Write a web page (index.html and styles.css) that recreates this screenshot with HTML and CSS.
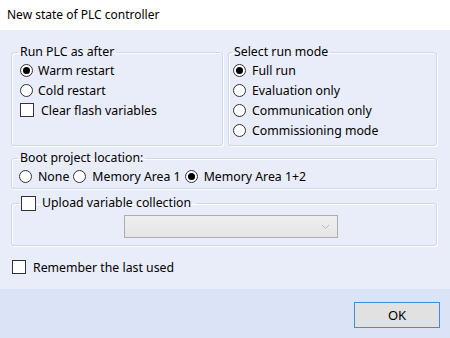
FILE: index.html
```html
<!DOCTYPE html>
<html lang="en">
<head>
    <meta charset="UTF-8">
    <title>New state of PLC controller</title>
    <link rel="stylesheet" href="styles.css">
</head>
<body>
    <div class="dialog">
        <div class="titlebar">New state of PLC controller</div>

        <div class="content">
            <div class="top-row">
                <fieldset class="group group-run">
                    <legend>Run PLC as after</legend>
                    <div class="group-body">
                        <label class="row"><input type="radio" name="restart" checked> Warm restart</label>
                        <label class="row"><input type="radio" name="restart"> Cold restart</label>
                        <label class="row"><input type="checkbox"> Clear flash variables</label>
                    </div>
                </fieldset>

                <fieldset class="group group-mode">
                    <legend>Select run mode</legend>
                    <div class="group-body">
                        <label class="row"><input type="radio" name="mode" checked> Full run</label>
                        <label class="row"><input type="radio" name="mode"> Evaluation only</label>
                        <label class="row"><input type="radio" name="mode"> Communication only</label>
                        <label class="row"><input type="radio" name="mode"> Commissioning mode</label>
                    </div>
                </fieldset>
            </div>

            <fieldset class="group group-boot">
                <legend>Boot project location:</legend>
                <div class="group-body inline-row">
                    <label class="row"><input type="radio" name="boot"> None</label>
                    <label class="row"><input type="radio" name="boot"> Memory Area 1</label>
                    <label class="row"><input type="radio" name="boot" checked> Memory Area 1+2</label>
                </div>
            </fieldset>

            <fieldset class="group group-upload">
                <legend><label class="row"><input type="checkbox"> Upload variable collection</label></legend>
                <div class="group-body">
                    <div class="combo">
                        <svg width="9" height="6" viewBox="0 0 9 6"><path d="M1 1 L4.5 4.5 L8 1" fill="none" stroke="#b9b9b9" stroke-width="1"/></svg>
                    </div>
                </div>
            </fieldset>

            <label class="row remember"><input type="checkbox"> Remember the last used</label>
        </div>

        <div class="footer">
            <button type="button" class="ok">OK</button>
        </div>
    </div>
</body>
</html>
```

FILE: styles.css
```css
body {
    margin: 0;
    font-family: "Noto Sans", sans-serif;
    font-size: 12.3px;
    color: #000;
}
.dialog {
    width: 450px;
    height: 338px;
    display: flex;
    flex-direction: column;
}
.titlebar {
    height: 30px;
    line-height: 30px;
    padding-left: 7px;
    font-size: 12px;
    background-color: #fff;
}
.content {
    flex: 1;
    background-color: #e9ecf9;
    padding: 14px 13px 0 11px;
}
.top-row {
    display: flex;
    gap: 5px;
}
.group {
    margin: 0;
    padding: 0;
    border: 1px solid #d2d6e3;
    border-radius: 3px;
    box-shadow: inset 1px 1px 0 #fdfdff, 1px 1px 0 #fdfdff;
    min-width: 0;
}
.group legend {
    padding: 0 2px;
    line-height: 16px;
    margin-left: 6px;
}
.group-run {
    flex: 0 0 212px;
    box-sizing: border-box;
}
.group-run .group-body {
    padding-left: 8px;
}
.group-mode {
    flex: 1;
}
.group-mode legend {
    margin-left: 3px;
}
.group-mode .group-body {
    padding: 0 0 5px 4px;
}
.group-mode input[type="radio"] {
    margin-right: 6px;
}
.group-boot {
    margin-top: 4px;
}
.group-boot .group-body {
    padding: 0 0 2px 7px;
}
.group-boot .row {
    margin-right: 4px;
}
.group-boot input[type="radio"] {
    margin-right: 6px;
}
.group-upload {
    margin-top: 6px;
}
.group-upload legend {
    margin-left: 7px;
    padding: 0 5px 0 2px;
}
.group-upload legend .row {
    height: 16px;
}
.group-upload .group-body {
    padding: 4px 0 7px 112px;
}
.row {
    display: flex;
    align-items: center;
    height: 20px;
    white-space: nowrap;
}
.inline-row {
    display: flex;
}
input[type="radio"],
input[type="checkbox"] {
    appearance: none;
    width: 13px;
    height: 13px;
    margin: 0 5px 0 0;
    border: 1px solid #333;
    background-color: #fff;
    box-sizing: border-box;
    flex: none;
    display: grid;
    place-content: center;
}
input[type="checkbox"] {
    width: 14px;
    height: 14px;
    margin-right: 7px;
}
input[type="radio"] {
    border-radius: 50%;
}
input[type="radio"]:checked::after {
    content: "";
    width: 7px;
    height: 7px;
    border-radius: 50%;
    background-color: #000;
}
.group-upload input[type="checkbox"] {
    width: 15px;
    height: 15px;
    margin-right: 6px;
}
.combo {
    width: 214px;
    height: 23px;
    box-sizing: border-box;
    border: 1px solid #adadad;
    background: linear-gradient(#efefef, #e5e5e5);
    display: flex;
    align-items: center;
    justify-content: flex-end;
    padding-right: 7px;
}
.remember {
    margin-top: 11px;
    padding-left: 1px;
}
.footer {
    height: 49px;
    background-color: #dbe4f6;
    display: flex;
    justify-content: flex-end;
    align-items: center;
    padding-right: 10px;
}
.ok {
    width: 86px;
    height: 26px;
    font-family: inherit;
    font-size: 13px;
    background-color: #e1e1e1;
    border: 1px solid #3b8fdc;
    margin-top: 3px;
}
```
